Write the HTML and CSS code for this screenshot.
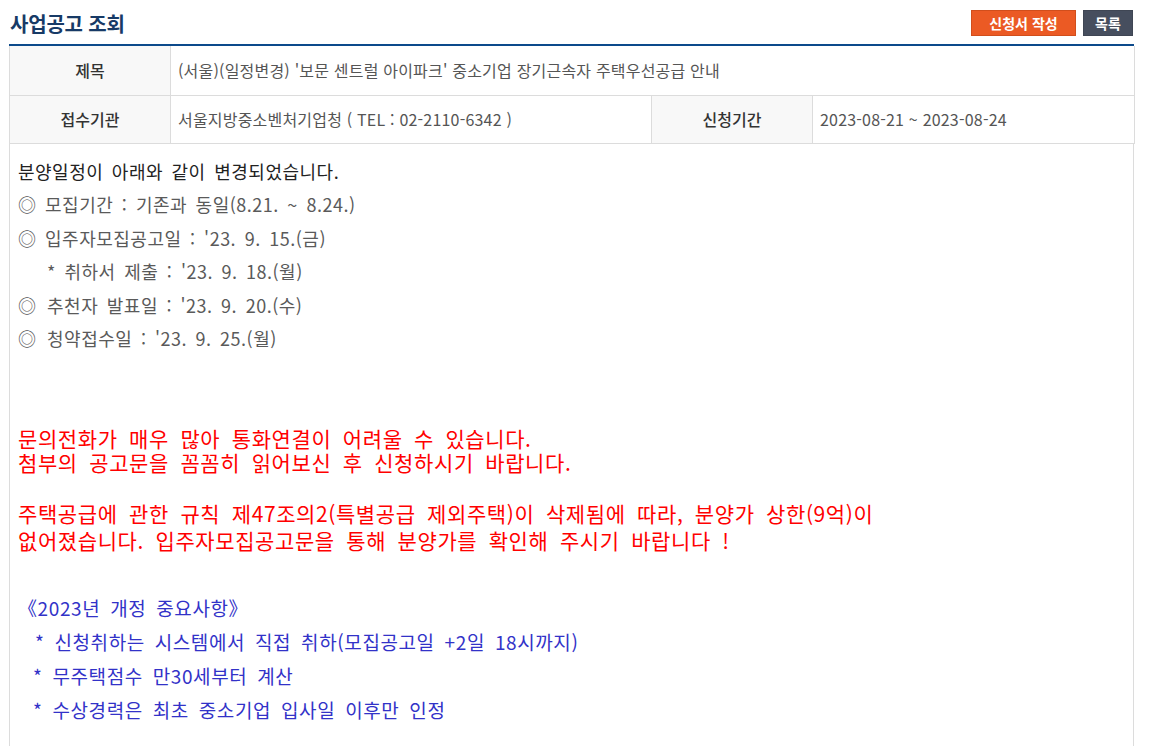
FILE: index.html
```html
<!DOCTYPE html>
<html lang="ko">
<head>
    <meta charset="UTF-8">
    <meta name="viewport" content="width=device-width, initial-scale=1.0">
    <title>사업공고 조회</title>
    <link rel="stylesheet" href="styles.css">
</head>
<body>
    <div class="wrap">
        <div class="head">
            <h2 class="title">사업공고 조회</h2>
            <div class="btns">
                <a class="btn btn-orange" href="#">신청서 작성</a>
                <a class="btn btn-dark" href="#">목록</a>
            </div>
        </div>

        <table class="view">
            <colgroup>
                <col class="col-th">
                <col class="col-td1">
                <col class="col-th">
                <col class="col-td2">
            </colgroup>
            <tr class="row1">
                <th>제목</th>
                <td colspan="3">(서울)(일정변경) '보문 센트럴 아이파크' 중소기업 장기근속자 주택우선공급 안내</td>
            </tr>
            <tr class="row2">
                <th>접수기관</th>
                <td>서울지방중소벤처기업청 ( TEL : 02-2110-6342 )</td>
                <th>신청기간</th>
                <td>2023-08-21 ~ 2023-08-24</td>
            </tr>
        </table>

        <div class="content">
            <div class="sched">
                <p class="lead">분양일정이 아래와 같이 변경되었습니다.</p>
                <p>◎ 모집기간 : 기존과 동일(8.21. ~ 8.24.)</p>
                <p>◎ 입주자모집공고일 : '23. 9. 15.(금)</p>
                <p class="sub">* 취하서 제출 : '23. 9. 18.(월)</p>
                <p><span class="mark">◎</span> 추천자 발표일 : '23. 9. 20.(수)</p>
                <p><span class="mark">◎</span> 청약접수일 : '23. 9. 25.(월)</p>
            </div>

            <div class="notice">
                <p>문의전화가 매우 많아 통화연결이 어려울 수 있습니다.</p>
                <p>첨부의 공고문을 꼼꼼히 읽어보신 후 신청하시기 바랍니다.</p>
            </div>

            <div class="notice notice-2">
                <p>주택공급에 관한 규칙 제47조의2(특별공급 제외주택)이 삭제됨에 따라, 분양가 상한(9억)이</p>
                <p>없어졌습니다. 입주자모집공고문을 통해 분양가를 확인해 주시기 바랍니다 !</p>
            </div>

            <div class="changes">
                <p class="changes-title">《2023년 개정 중요사항》</p>
                <p class="item item-first">* 신청취하는 시스템에서 직접 취하(모집공고일 +2일 18시까지)</p>
                <p class="item">* 무주택점수 만30세부터 계산</p>
                <p class="item">* 수상경력은 최초 중소기업 입사일 이후만 인정</p>
            </div>
        </div>
    </div>
</body>
</html>
```

FILE: styles.css
```css
body {
    margin: 0;
    background: #fff;
    font-family: "Noto Sans CJK KR", "Noto Sans", sans-serif;
    color: #333;
}

p {
    margin: 0;
}

.wrap {
    width: 1125px;
    margin-left: 9px;
}

/* title bar */
.head {
    display: flex;
    justify-content: space-between;
    align-items: flex-start;
    height: 44px;
    border-bottom: 2px solid #0c4a8b;
}

.title {
    margin: 0;
    padding-top: 11px;
    margin-left: 1px;
    font-size: 20px;
    line-height: 26px;
    font-weight: 700;
    letter-spacing: -0.2px;
    color: #173a66;
}

.btns {
    display: flex;
    gap: 7px;
    padding-top: 10px;
    padding-right: 1px;
}

.btn {
    display: block;
    height: 26px;
    line-height: 24px;
    box-sizing: border-box;
    padding: 0;
    text-align: center;
    font-size: 14px;
    font-weight: 700;
    color: #fff;
    text-decoration: none;
    border: 1px solid transparent;
}

.btn-orange {
    width: 105px;
    background: #eb5a24;
    border-color: #d14e1c;
}

.btn-dark {
    width: 50px;
    background: #464e5e;
    border-color: #3f4654;
}

/* info table */
.view {
    width: 1125px;
    table-layout: fixed;
    border-collapse: collapse;
}

.col-th {
    width: 161px;
}

.col-td1 {
    width: 481px;
}

.col-td2 {
    width: 322px;
}

.view th,
.view td {
    border: 1px solid #dcdcdc;
    font-size: 16px;
    padding: 0 7px;
}

.view tr:first-child th,
.view tr:first-child td {
    border-top: none;
}

.view th {
    background: #f8f8f8;
    font-weight: 500;
    color: #333;
    text-align: center;
}

.view td {
    color: #555;
    text-align: left;
    letter-spacing: 0.2px;
}

.row1 {
    height: 49px;
}

.row2 {
    height: 48px;
}

/* body text */
.content {
    border-left: 1px solid #dcdcdc;
    border-right: 1px solid #dcdcdc;
    padding: 11px 8px 60px;
}

.sched p {
    font-size: 18px;
    line-height: 33.5px;
    color: #5a5a5a;
    letter-spacing: 0.5px;
    word-spacing: 3px;
}

.sched .lead {
    color: #222;
}

.sched .sub {
    padding-left: 29px;
}

.mark {
    margin-right: 2px;
}

.notice {
    margin-top: 70px;
}

.notice p {
    font-size: 21px;
    line-height: 24px;
    color: #ff0000;
    letter-spacing: 0.6px;
    word-spacing: 5px;
}

.notice-2 {
    margin-top: 26px;
}

.notice-2 p {
    line-height: 27px;
}

.changes {
    margin-top: 37px;
}

.changes p {
    font-size: 19px;
    line-height: 34px;
    color: #3232c8;
    letter-spacing: 0.6px;
    word-spacing: 4px;
}

.item {
    padding-left: 15px;
}

.item-first {
    padding-left: 17px;
}
```
